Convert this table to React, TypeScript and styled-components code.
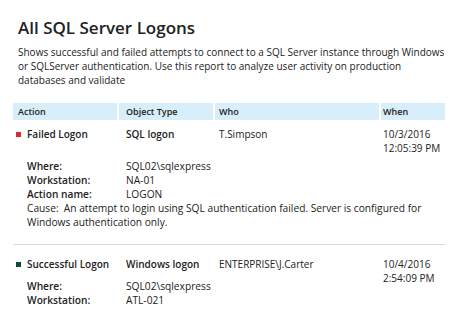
import React from "react";
import styled, { createGlobalStyle } from "styled-components";

const Global = createGlobalStyle`
  html, body { margin: 0; padding: 0; background: #fff; }
  body { font-family: "Open Sans", "Noto Sans", sans-serif; color: #222; }
`;

const COLS = "104px 94px 164px 64px";
const PADS = [5, 7, 4, 2];

const Page = styled.div`
  width: 455px;
  height: 320px;
  overflow: hidden;
  padding: 15px 10px 0 13px;
  box-sizing: border-box;
`;

const Title = styled.h1`
  margin: 0 0 0 5px;
  font-size: 17px;
  font-weight: 600;
  line-height: 26px;
  color: #222;
`;

const Desc = styled.p`
  margin: 4px 0 0 5px;
  font-size: 10px;
  line-height: 14px;
  color: #222;
`;

const HeaderRow = styled.div`
  display: grid;
  grid-template-columns: ${COLS};
  column-gap: 2px;
  margin-top: 16px;
`;

const Head = styled.div<{ $pad: number }>`
  background: #d8eefa;
  height: 17px;
  font-size: 9px;
  font-weight: 600;
  line-height: 17px;
  padding-left: ${(p) => p.$pad}px;
`;

const Record = styled.div<{ $top: number }>`
  display: grid;
  grid-template-columns: ${COLS};
  column-gap: 2px;
  padding-top: ${(p) => p.$top}px;
`;

const Cell = styled.div<{ $bold?: boolean; $pad: number; $span?: boolean }>`
  font-size: 10px;
  font-weight: ${(p) => (p.$bold ? 600 : 400)};
  line-height: 14px;
  padding-left: ${(p) => p.$pad}px;
  display: flex;
  align-items: flex-start;
  grid-row: ${(p) => (p.$span ? "span 2" : "auto")};
`;

const Square = styled.span<{ $color: string }>`
  width: 5px;
  height: 5px;
  background: ${(p) => p.$color};
  margin: 5px 6px 0 -2px;
  flex: none;
`;

const Details = styled.div<{ $gap: number }>`
  grid-column: 1 / 4;
  display: grid;
  grid-template-columns: 99px 1fr;
  padding: ${(p) => p.$gap}px 0 0 14px;
  font-size: 10.2px;
  line-height: 14px;
`;

const Label = styled.div`
  font-weight: 600;
`;

const Value = styled.div``;

const Cause = styled.div`
  grid-column: 1 / -1;
  white-space: pre-wrap;
  margin-right: -50px;
`;

const Sep = styled.div`
  border-top: 1px solid #d9d9d9;
  margin-top: 15px;
`;

export default function App() {
  return (
    <Page>
      <Global />
      <Title>All SQL Server Logons</Title>
      <Desc>
        Shows successful and failed attempts to connect to a SQL Server instance through Windows or SQLServer
        authentication. Use this report to analyze user activity on production databases and validate
      </Desc>
      <HeaderRow>
        <Head $pad={PADS[0]}>Action</Head>
        <Head $pad={PADS[1]}>Object Type</Head>
        <Head $pad={PADS[2]}>Who</Head>
        <Head $pad={PADS[3]}>When</Head>
      </HeaderRow>

      <Record $top={7}>
        <Cell $bold $pad={PADS[0]}>
          <Square $color="#e0262e" />
          Failed Logon
        </Cell>
        <Cell $bold $pad={PADS[1]}>SQL logon</Cell>
        <Cell $pad={PADS[2]}>T.Simpson</Cell>
        <Cell $pad={PADS[3]} $span>
          10/3/2016
          <br />
          12:05:39 PM
        </Cell>
        <Details $gap={18}>
          <Label>Where:</Label>
          <Value>SQL02\sqlexpress</Value>
          <Label>Workstation:</Label>
          <Value>NA-01</Value>
          <Label>Action name:</Label>
          <Value>LOGON</Value>
          <Cause>
            {"Cause:  An attempt to login using SQL authentication failed. Server is configured for Windows authentication only."}
          </Cause>
        </Details>
      </Record>
      <Sep />

      <Record $top={12}>
        <Cell $bold $pad={PADS[0]}>
          <Square $color="#0d4a3a" />
          Successful Logon
        </Cell>
        <Cell $bold $pad={PADS[1]}>Windows logon</Cell>
        <Cell $pad={PADS[2]}>ENTERPRISE\J.Carter</Cell>
        <Cell $pad={PADS[3]} $span>
          10/4/2016
          <br />
          2:54:09 PM
        </Cell>
        <Details $gap={8}>
          <Label>Where:</Label>
          <Value>SQL02\sqlexpress</Value>
          <Label>Workstation:</Label>
          <Value>ATL-021</Value>
        </Details>
      </Record>
    </Page>
  );
}
